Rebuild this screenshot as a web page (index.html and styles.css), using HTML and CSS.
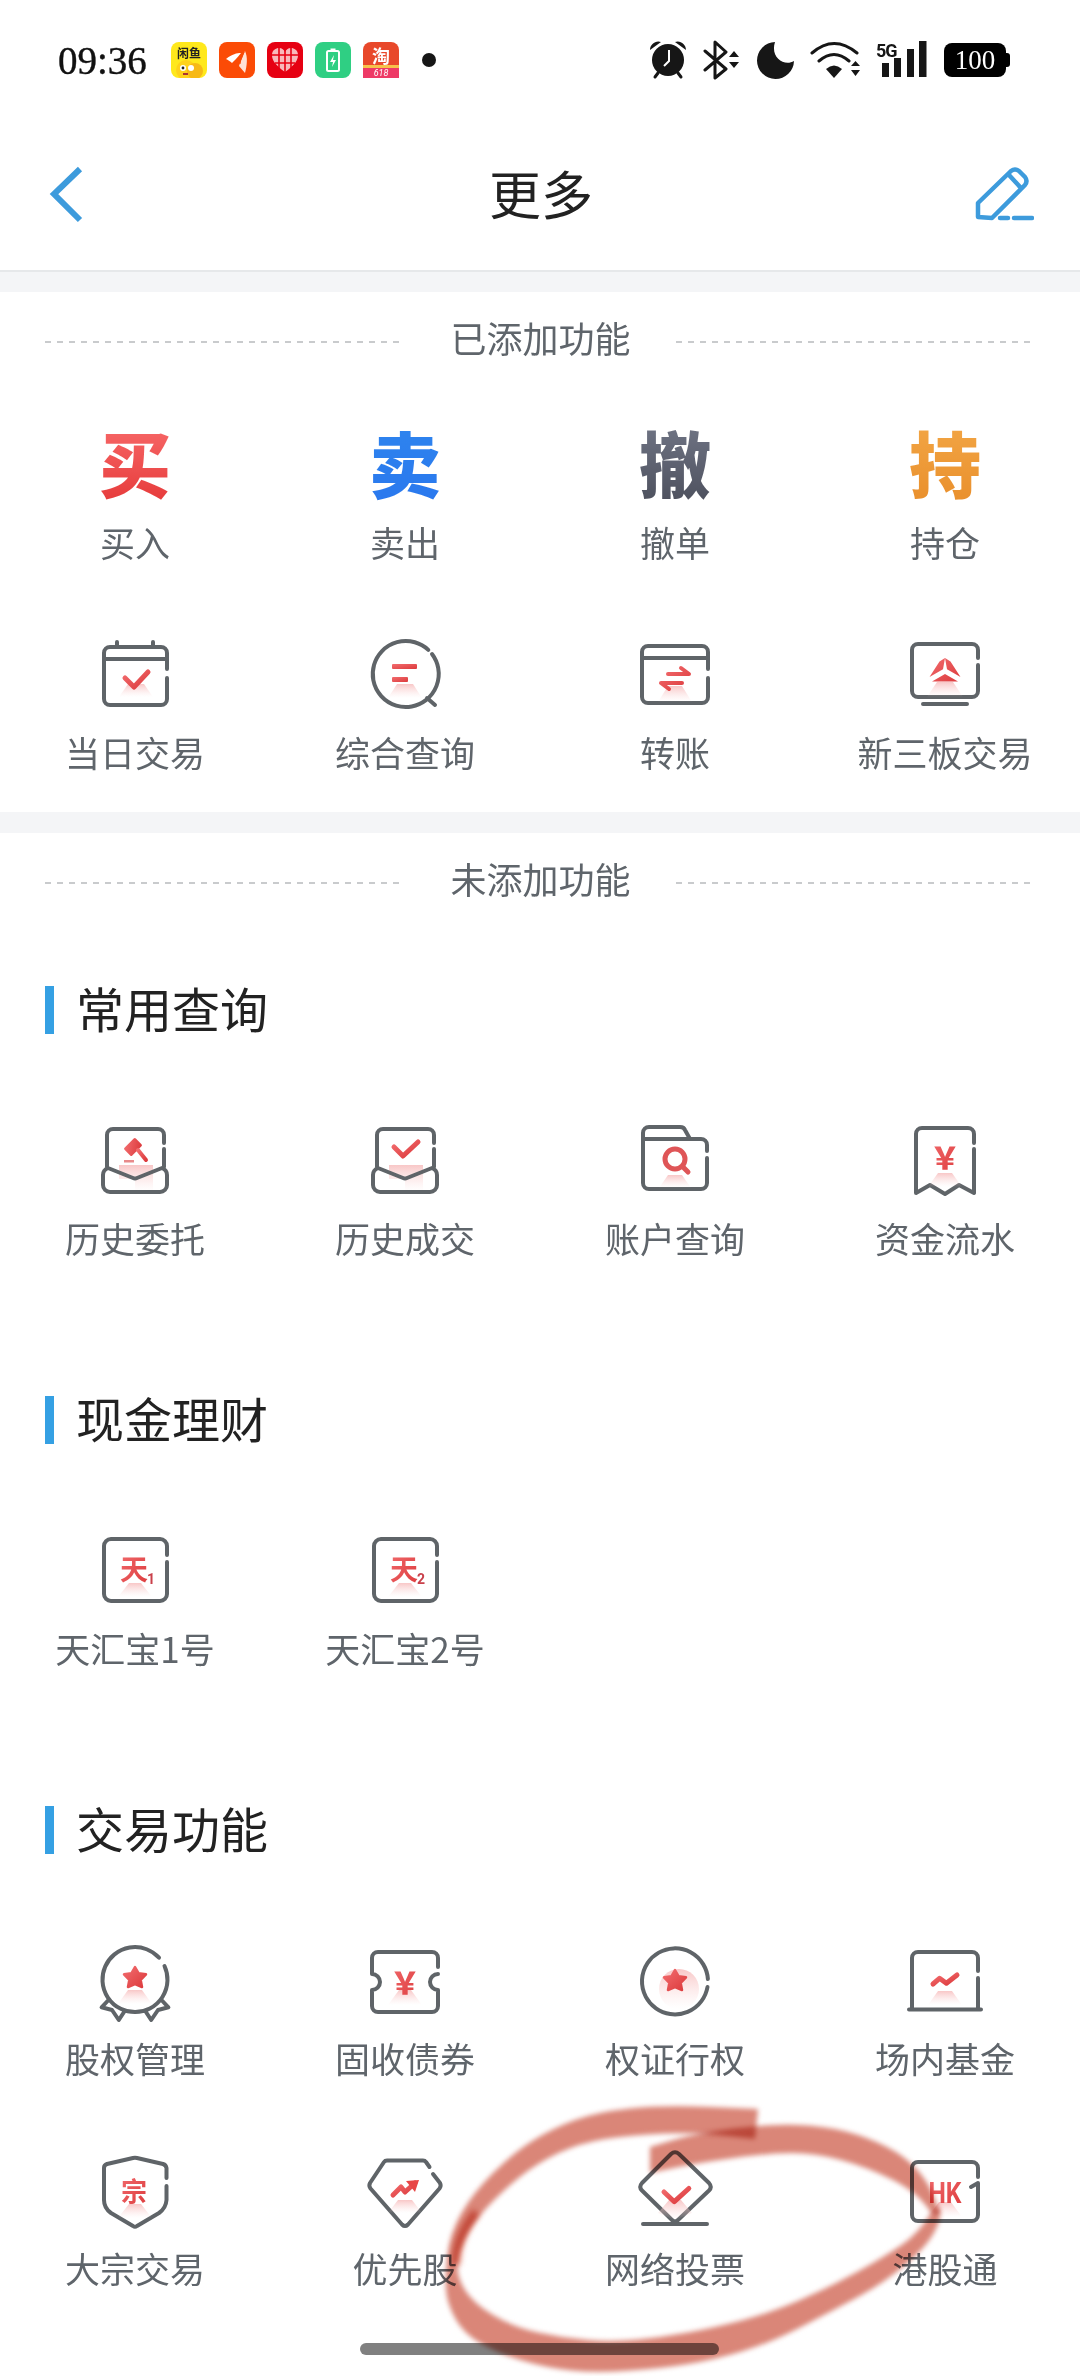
FILE: index.html
```html
<!DOCTYPE html>
<html lang="zh-CN">
<head>
    <meta charset="UTF-8">
    <meta name="viewport" content="width=device-width, initial-scale=1.0">
    <title>更多</title>
    <link rel="stylesheet" href="styles.css">
</head>
<body>
    <!-- shared gradients -->
    <svg class="defs" aria-hidden="true">
        <defs>
            <linearGradient id="red" x1="0" y1="0" x2="1" y2="1">
                <stop offset="0" stop-color="#f26c6e"/>
                <stop offset="1" stop-color="#dc3a3c"/>
            </linearGradient>
            <linearGradient id="fade" x1="0" y1="0" x2="0" y2="1">
                <stop offset="0" stop-color="#f6b4b4" stop-opacity=".75"/>
                <stop offset="1" stop-color="#fbdcdc" stop-opacity="0"/>
            </linearGradient>
        </defs>
    </svg>

    <!-- Status bar -->
    <div class="statusbar">
        <span class="time">09:36</span>
        <div class="apps">
            <svg class="app" viewBox="0 0 36 36">
                <rect width="36" height="36" rx="8" fill="#ffe81c"/>
                <text x="18" y="16" class="app-name">闲鱼</text>
                <circle cx="15" cy="28" r="10" fill="#ffd21a"/>
                <circle cx="24" cy="29" r="8" fill="#f7b916"/>
                <circle cx="12" cy="26" r="3" fill="#fff"/>
                <circle cx="20" cy="26" r="3" fill="#fff"/>
                <circle cx="12" cy="26" r="1.4" fill="#222"/>
                <path d="M12 32h5" stroke="#a33" stroke-width="2"/>
            </svg>
            <svg class="app" viewBox="0 0 36 36">
                <rect width="36" height="36" rx="8" fill="#fb4b06"/>
                <path d="M7 17C13 12 18 11 22 11C18 16 15 19 13 21C11 19 9 18 7 17Z" fill="#fff"/>
                <path d="M26 9C24 14 21 21 20 24L26 31C28 24 29 15 26 9Z" fill="#ffe3d6"/>
                <path d="M21 22C21 18 24 13 25 10" stroke="#fb4b06" stroke-width="1" fill="none"/>
            </svg>
            <svg class="app" viewBox="0 0 36 36">
                <rect width="36" height="36" rx="8" fill="#e60012"/>
                <path d="M18 30C8 23 5 18 5 13C5 8 9 6 12 6C15 6 17 8 18 10C19 8 21 6 24 6C27 6 31 8 31 13C31 18 28 23 18 30Z" fill="#f8b9bb"/>
                <path d="M18 6V30M5 13H31M8 21H28M12 6V26M24 6V26" stroke="#e60012" stroke-width="1.6"/>
            </svg>
            <svg class="app" viewBox="0 0 36 36">
                <rect width="36" height="36" rx="8" fill="#2fcf83"/>
                <rect x="12" y="9" width="12" height="20" rx="1.5" fill="none" stroke="#fff" stroke-width="2"/>
                <rect x="15.5" y="6.5" width="5" height="2.5" fill="#fff"/>
                <path d="M19 13L15 20H18L17 25L21 18H18Z" fill="#fff"/>
            </svg>
            <svg class="app" viewBox="0 0 36 36">
                <rect width="36" height="36" rx="8" fill="#e8482a"/>
                <rect y="26" width="36" height="10" fill="#ee3a66"/>
                <rect y="23" width="36" height="3" fill="#f7c24a"/>
                <text x="18" y="21" class="app-tao">淘</text>
                <text x="18" y="34" class="app-618">618</text>
            </svg>
            <span class="more-dot"></span>
        </div>
        <div class="sys-icons">
            <svg class="sys" width="38" height="40" viewBox="0 0 38 40">
                <circle cx="19" cy="20" r="16"/>
                <path d="M1 10C1 4 7 0 12 2ZM37 10C37 4 31 0 26 2Z"/>
                <path d="M9 33L6 37M29 33L32 37" class="sys-line"/>
                <path d="M20 10V21L15 26" fill="none" stroke="#fff" stroke-width="2"/>
            </svg>
            <svg class="sys" width="38" height="40" viewBox="0 0 38 40">
                <path d="M2 11L23 29L12 38V2L23 12L2 30" class="sys-line" stroke-width="3.4"/>
                <path d="M26 17H36L31 11ZM26 22H36L31 28Z"/>
            </svg>
            <svg class="sys" width="37" height="40" viewBox="0 0 37 40">
                <path d="M18 2A18.5 18.5 0 1 0 37 21C27 27 13 17 18 2Z"/>
            </svg>
            <svg class="sys" width="50" height="40" viewBox="0 0 50 40">
                <path d="M2 13Q24 -6 47 13M9 21Q24 8 39 21" class="sys-line" stroke-width="4"/>
                <path d="M16 29Q24 22 32 29L24 38Z"/>
                <path d="M41 26H50L45.500 21ZM41 30H50L45.500 36Z"/>
            </svg>
            <svg class="sys" width="52" height="40" viewBox="0 0 52 40">
                <text x="0" y="17" class="net">5G</text>
                <rect x="6" y="23" width="7" height="14"/>
                <rect x="18" y="18" width="7" height="19"/>
                <rect x="31" y="9" width="7" height="28"/>
                <rect x="43" y="1" width="7.500" height="36"/>
            </svg>
            <div class="battery"><span>100</span></div>
        </div>
    </div>

    <!-- Nav -->
    <div class="navbar">
        <svg class="nav-back" width="36" height="60" viewBox="0 0 36 60">
            <path d="M32 4L6 29L32 55"/>
        </svg>
        <h1>更多</h1>
        <svg class="nav-edit" width="60" height="60" viewBox="0 0 60 60">
            <path d="M4 52V38L37 6Q41 3 45 6L51 12Q54 16 51 20L18 53Z"/>
            <path d="M35 10L47 23"/>
            <path d="M26 53H34M40 53H58" stroke-width="4"/>
        </svg>
    </div>
    <div class="band band-first"></div>

    <!-- Added -->
    <div class="section section-added">
        <div class="divider"><span>已添加功能</span></div>
        <div class="grid">
            <div class="cell"><div class="big big-buy">买</div><p>买入</p></div>
            <div class="cell"><div class="big big-sell">卖</div><p>卖出</p></div>
            <div class="cell"><div class="big big-cancel">撤</div><p>撤单</p></div>
            <div class="cell"><div class="big big-hold">持</div><p>持仓</p></div>
            <div class="cell">
                <svg class="ico" viewBox="0 0 80 80">
                    <path d="M72 35V19a6 6 0 0 0-6-6H15a6 6 0 0 0-6 6v46a6 6 0 0 0 6 6h51a6 6 0 0 0 6-6V44M9 25H72M22 8V13M58 8V13"/>
                    <path class="glow" d="M33 50h16l9 13H24z" fill="url(#fade)"/>
                    <path class="tick" d="M30 44L39 53L53 38" stroke="url(#red)"/>
                </svg>
                <p>当日交易</p>
            </div>
            <div class="cell">
                <svg class="ico" viewBox="0 0 80 80">
                    <path d="M63.300 15.900A33 33 0 1 0 67 20M62 64L70 71"/>
                    <path class="glow" d="M32 50h16l9 14H23z" fill="url(#fade)"/>
                    <rect class="glow" x="27" y="30" width="25" height="5" rx="1" fill="url(#red)"/>
                    <rect class="glow" x="27" y="43" width="16" height="5" rx="1" fill="url(#red)"/>
                </svg>
                <p>综合查询</p>
            </div>
            <div class="cell">
                <svg class="ico" viewBox="0 0 80 80">
                    <path d="M73 35V18a6 6 0 0 0-6-6H13a6 6 0 0 0-6 6v45a6 6 0 0 0 6 6h54a6 6 0 0 0 6-6V44M7 24H73"/>
                    <path class="glow" d="M33 52h14l10 16H23z" fill="url(#fade)"/>
                    <path class="tick tick-thin" d="M33 40H54L46 34M47 49H26L34 55" stroke="url(#red)"/>
                </svg>
                <p>转账</p>
            </div>
            <div class="cell">
                <svg class="ico" viewBox="0 0 80 80">
                    <path d="M73 24V16a6 6 0 0 0-6-6H13a6 6 0 0 0-6 6v41a6 6 0 0 0 6 6h54a6 6 0 0 0 6-6V31M18 70H62"/>
                    <path class="glow" d="M32 48h16l10 15H22z" fill="url(#fade)"/>
                    <path class="glow" d="M34.500 27.500L24.500 43L38 35.300L40 24ZM45.500 27.500L55.500 43L42 35.300L40 24ZM27 47.500L40 40L53 47.500Z" fill="url(#red)"/>
                </svg>
                <p>新三板交易</p>
            </div>
        </div>
    </div>
    <div class="band band-second"></div>

    <!-- Not added -->
    <div class="section">
        <div class="divider"><span>未添加功能</span></div>

        <h2 class="group-title group-first">常用查询</h2>
        <div class="grid">
            <div class="cell">
                <svg class="ico" viewBox="0 0 80 80">
                    <path class="glow" d="M24 45h34v14H24zM40 59h18v13H40z" fill="url(#fade)"/>
                    <path d="M69 23V15a6 6 0 0 0-6-6H18a6 6 0 0 0-6 6V47M69 29V47M13 48Q8 50 8 55V65a7 7 0 0 0 7 7H65a7 7 0 0 0 7-7V55Q72 50 67 48L42 58Q40 59 38 58Z"/>
                    <rect class="glow" x="30" y="21.500" width="16" height="11" rx="1.500" transform="rotate(-45 38 27)" fill="url(#red)"/>
                    <path class="tick tick-thin" d="M43 30L51 40" stroke="url(#red)"/>
                    <rect class="glow" x="29" y="40" width="10" height="2.500" fill="#e88a8a"/>
                </svg>
                <p>历史委托</p>
            </div>
            <div class="cell">
                <svg class="ico" viewBox="0 0 80 80">
                    <path class="glow" d="M24 45h34v14H24zM40 59h18v13H40z" fill="url(#fade)"/>
                    <path d="M69 23V15a6 6 0 0 0-6-6H18a6 6 0 0 0-6 6V47M69 29V47M13 48Q8 50 8 55V65a7 7 0 0 0 7 7H65a7 7 0 0 0 7-7V55Q72 50 67 48L42 58Q40 59 38 58Z"/>
                    <path class="tick" d="M29 27L38 36L53 22" stroke="url(#red)"/>
                </svg>
                <p>历史成交</p>
            </div>
            <div class="cell">
                <svg class="ico" viewBox="0 0 80 80">
                    <path d="M72 31V25a6 6 0 0 0-6-6H55L50 10Q49 7 45 7H14a6 6 0 0 0-6 6V63a6 6 0 0 0 6 6H66a6 6 0 0 0 6-6V38M9 19H55"/>
                    <path class="glow" d="M33 55h14l9 13H24z" fill="url(#fade)"/>
                    <circle class="tick" cx="40" cy="39" r="10" stroke="#df5557"/>
                    <path class="tick" d="M48 47L53 52" stroke="#df5557"/>
                </svg>
                <p>账户查询</p>
            </div>
            <div class="cell">
                <svg class="ico" viewBox="0 0 80 80">
                    <path d="M69 23V14a6 6 0 0 0-6-6H17a6 6 0 0 0-6 6V73L25 65L40 74L54 65L69 73V29"/>
                    <path class="glow" d="M33 53h14l10 14H23z" fill="url(#fade)"/>
                    <text x="40" y="49" class="ico-text ico-yen" fill="url(#red)">￥</text>
                </svg>
                <p>资金流水</p>
            </div>
        </div>

        <h2 class="group-title">现金理财</h2>
        <div class="grid">
            <div class="cell">
                <svg class="ico" viewBox="0 0 80 80">
                    <path d="M72 25V16a7 7 0 0 0-7-7H16a7 7 0 0 0-7 7V64a7 7 0 0 0 7 7H65a7 7 0 0 0 7-7V32"/>
                    <path class="glow" d="M34 53h12l11 14H23z" fill="url(#fade)"/>
                    <text x="39" y="50" class="ico-text ico-tian" fill="url(#red)">天</text>
                    <text x="56" y="54" class="ico-text ico-sub" fill="#c9404a">1</text>
                </svg>
                <p>天汇宝1号</p>
            </div>
            <div class="cell">
                <svg class="ico" viewBox="0 0 80 80">
                    <path d="M72 25V16a7 7 0 0 0-7-7H16a7 7 0 0 0-7 7V64a7 7 0 0 0 7 7H65a7 7 0 0 0 7-7V32"/>
                    <path class="glow" d="M34 53h12l11 14H23z" fill="url(#fade)"/>
                    <text x="39" y="50" class="ico-text ico-tian" fill="url(#red)">天</text>
                    <text x="56" y="54" class="ico-text ico-sub" fill="#c9404a">2</text>
                </svg>
                <p>天汇宝2号</p>
            </div>
        </div>

        <h2 class="group-title">交易功能</h2>
        <div class="grid">
            <div class="cell">
                <svg class="ico" viewBox="0 0 80 80">
                    <path d="M64 17.700A32.500 32.500 0 1 0 69.500 26M13.500 60L6.600 67.300L17 70L23.800 80L29.700 71M66.500 60L73.400 67.300L63 70L56.200 80L50.300 71"/>
                    <path class="glow" d="M33 50h14l10 14H23z" fill="url(#fade)"/>
                    <path class="star" d="M40 27L43.500 33.200L51 34.300L45.700 39.900L47 47L40 44L33 47L34.300 39.900L29 34.300L36.500 33.200Z" fill="url(#red)" stroke="url(#red)"/>
                </svg>
                <p>股权管理</p>
            </div>
            <div class="cell">
                <svg class="ico" viewBox="0 0 80 80">
                    <path d="M73 27V18a6 6 0 0 0-6-6H13a6 6 0 0 0-6 6V34a8 8 0 0 1 0 16V66a6 6 0 0 0 6 6H67a6 6 0 0 0 6-6V50a8 8 0 0 1 0-16"/>
                    <path class="glow" d="M34 50h12l11 15H23z" fill="url(#fade)"/>
                    <text x="40" y="54" class="ico-text ico-yen" fill="url(#red)">￥</text>
                </svg>
                <p>固收债券</p>
            </div>
            <div class="cell">
                <svg class="ico" viewBox="0 0 80 80">
                    <path d="M72.900 39A33 33 0 1 0 72.500 47"/>
                    <circle class="glow" cx="44" cy="49" r="20" fill="url(#fade)"/>
                    <path class="star" d="M40 30L43.500 36.200L51 37.300L45.700 42.900L47 50L40 47L33 50L34.300 42.900L29 37.300L36.500 36.200Z" fill="url(#red)" stroke="url(#red)"/>
                </svg>
                <p>权证行权</p>
            </div>
            <div class="cell">
                <svg class="ico" viewBox="0 0 80 80">
                    <path d="M73 31V18a6 6 0 0 0-6-6H13a6 6 0 0 0-6 6V68M73 38V68M4 69.500H76"/>
                    <path class="glow" d="M33 51h14l10 14H23z" fill="url(#fade)"/>
                    <path class="tick" d="M28 44L34.500 38.300L41.400 43.300L52 35" stroke="url(#red)"/>
                </svg>
                <p>场内基金</p>
            </div>
            <div class="cell">
                <svg class="ico" viewBox="0 0 80 80">
                    <path d="M71.500 28V18Q71 15 68 14L42 8Q40 7.500 38 8L12 14Q9 15 9 18V50Q9 58 16 63L38 76Q40 77.500 42 76L64 63Q71 58 71.500 50V36"/>
                    <path class="glow" d="M34 54h12l11 14H23z" fill="url(#fade)"/>
                    <text x="39" y="51" class="ico-text ico-zong" fill="url(#red)">宗</text>
                </svg>
                <p>大宗交易</p>
            </div>
            <div class="cell">
                <svg class="ico" viewBox="0 0 80 80">
                    <path d="M64.500 17L61 12Q60 10.500 58 10.500H22Q20 10.500 19 12L5 33Q3.500 36 5.500 38.500L37 74.500Q40 77.500 43 74.500L74.500 38.500Q76.500 36 75 33L68 24"/>
                    <path class="glow" d="M33 50h14l10 13H23z" fill="url(#fade)"/>
                    <path class="tick" d="M28 45L36 37L40 42L50 33" stroke="url(#red)"/>
                    <path class="glow" d="M41 31L54 30L50 42Z" fill="#e84646"/>
                </svg>
                <p>优先股</p>
            </div>
            <div class="cell">
                <svg class="ico" viewBox="0 0 80 80">
                    <path d="M36 4Q40 .5 44 4L74 33Q77.500 37 74 40.500L43 70Q40 73 37 70L7 40.500Q3.500 37 7 33ZM8 74H72"/>
                    <path class="glow" d="M34 50h12l11 13L40 70L23 63z" fill="url(#fade)"/>
                    <path class="tick" d="M29 42L39.300 51.700L53.800 38.500" stroke="url(#red)"/>
                </svg>
                <p>网络投票</p>
            </div>
            <div class="cell">
                <svg class="ico" viewBox="0 0 80 80">
                    <path d="M73 27V18a6 6 0 0 0-6-6H13a6 6 0 0 0-6 6V65a6 6 0 0 0 6 6H67a6 6 0 0 0 6-6V33L66 37"/>
                    <path class="glow" d="M34 52h12l11 15H23z" fill="url(#fade)"/>
                    <text x="40" y="53" class="ico-text ico-hk" textLength="33" lengthAdjust="spacingAndGlyphs" fill="url(#red)">HK</text>
                </svg>
                <p>港股通</p>
            </div>
        </div>
    </div>

    <div class="home-bar"></div>

    <!-- hand drawn circle on top of the screenshot -->
    <svg class="scribble" width="1080" height="2376" viewBox="0 0 1080 2376">
        <path d="M650 2147L673.500 2140Q697 2133 733.500 2128.500Q770 2124 797.500 2125Q825 2126 846 2131.500Q867 2137 886 2146.500Q905 2156 917 2169.500Q929 2183 934.500 2198L940 2213L932 2214Q919 2193 893 2180Q867 2167 841 2160Q815 2153 792.500 2153Q770 2153 733.500 2158Q697 2163 673.500 2168L650 2173Z"/>
        <path d="M758 2109L710 2107Q663 2105 630 2108.500Q597 2112 575 2120Q553 2128 533 2140.500Q513 2153 493 2173Q473 2193 461.500 2213Q450 2233 447.500 2255Q445 2277 446 2290Q447 2303 455 2318Q463 2333 480 2343Q497 2353 522 2360.500Q547 2368 572 2370.500Q597 2373 630 2370.500Q663 2368 688 2364Q713 2360 741.500 2351.500Q770 2343 800 2327.500Q830 2312 857 2297.500Q884 2283 905 2265Q926 2247 933.500 2233.500Q941 2220 940 2213.500L939 2207L931 2213Q919 2233 901.500 2245Q884 2257 857 2272Q830 2287 800 2300Q770 2313 741.500 2320.500Q713 2328 688 2332.500Q663 2337 638 2339.500Q613 2342 588 2340Q563 2338 538 2332.500Q513 2327 493 2315Q473 2303 465 2290Q457 2277 457.500 2265Q458 2253 465.500 2238Q473 2223 486.500 2208Q500 2193 518.500 2178Q537 2163 558.500 2153Q580 2143 605 2139Q630 2135 663.500 2133.500Q697 2132 755 2139Z"/>
        <path class="scribble-dark" d="M456 2265C456 2245 463 2230 476 2212"/>
    </svg>
</body>
</html>
```

FILE: styles.css
```css
/* General */
* {
    box-sizing: border-box;
}
body {
    position: relative;
    width: 1080px;
    height: 2376px;
    margin: 0;
    overflow: hidden;
    background-color: #fff;
    font-family: "Noto Sans CJK SC", "Noto Sans", sans-serif;
    color: #5f656b;
}
p, h1, h2 {
    margin: 0;
    font-weight: 400;
}
.defs {
    position: absolute;
    width: 0;
    height: 0;
}

/* Status bar */
.statusbar {
    display: flex;
    align-items: center;
    height: 120px;
    padding: 0 70px 0 58px;
}
.time {
    font-family: "Liberation Serif", serif;
    font-size: 39px;
    color: #111;
    -webkit-text-stroke: 0.4px #111;
}
.apps {
    display: flex;
    align-items: center;
    gap: 12px;
    margin-left: 24px;
}
.app {
    width: 36px;
    height: 36px;
}
.app-name {
    font-size: 12px;
    font-weight: 700;
    text-anchor: middle;
    fill: #222;
}
.app-tao {
    font-size: 18px;
    font-weight: 700;
    text-anchor: middle;
    fill: #fff;
}
.app-618 {
    font-family: "Roboto", sans-serif;
    font-size: 9px;
    font-style: italic;
    text-anchor: middle;
    fill: #fff;
}
.more-dot {
    width: 14px;
    height: 14px;
    margin-left: 11px;
    border-radius: 50%;
    background-color: #161616;
}
.sys-icons {
    display: flex;
    align-items: center;
    gap: 16px;
    margin-left: auto;
}
.sys {
    fill: #161616;
}
.sys-line {
    fill: none;
    stroke: #161616;
    stroke-width: 3;
    stroke-linecap: round;
    stroke-linejoin: round;
}
.net {
    font-family: "Roboto", sans-serif;
    font-size: 18px;
    font-weight: 700;
    letter-spacing: -1px;
}
.battery {
    position: relative;
    display: flex;
    align-items: center;
    justify-content: center;
    width: 62px;
    height: 34px;
    margin-right: 4px;
    border-radius: 8px;
    background-color: #000;
    font-family: "Liberation Serif", serif;
    font-size: 27px;
    color: #fff;
}
.battery::after {
    content: "";
    position: absolute;
    top: 10px;
    right: -4px;
    width: 4px;
    height: 14px;
    border-radius: 0 3px 3px 0;
    background-color: #000;
}

/* Nav */
.navbar {
    display: grid;
    grid-template-columns: 1fr auto 1fr;
    align-items: center;
    height: 150px;
    padding: 0 46px 0 48px;
}
.navbar h1 {
    margin-bottom: 6px;
    font-size: 52px;
    color: #222;
}
.nav-back path {
    fill: none;
    stroke: #3d9bdc;
    stroke-width: 6;
}
.nav-edit {
    justify-self: end;
}
.nav-edit path {
    fill: none;
    stroke: #3d9bdc;
    stroke-width: 4.5;
    stroke-linecap: round;
    stroke-linejoin: round;
}
.band {
    background-color: #f4f5f7;
}
.band-first {
    height: 22px;
    border-top: 2px solid #e6e8ea;
}
.band-second {
    height: 21px;
}

/* Sections */
.section-added {
    height: 520px;
}
.divider {
    display: flex;
    align-items: center;
    gap: 48px;
    height: 100px;
    padding: 0 50px 0 45px;
    font-size: 36px;
    white-space: nowrap;
}
.divider span {
    margin: 0 -3px 10px 3px;
}
.divider::before,
.divider::after {
    content: "";
    flex: 1;
    height: 2px;
    background-image: repeating-linear-gradient(90deg, #c9cbcd 0 6px, transparent 6px 12px);
}
.section-added .grid {
    margin-top: 32px;
}
.group-title {
    height: 48px;
    margin: 138px 0 86px 45px;
    padding-left: 22px;
    border-left: 9px solid #35a0e3;
    font-size: 48px;
    line-height: 42px;
    color: #222;
}
.group-first {
    margin-top: 53px;
}
.grid {
    display: grid;
    grid-template-columns: repeat(4, 1fr);
    row-gap: 72px;
}
.cell {
    display: flex;
    flex-direction: column;
    align-items: center;
    gap: 18px;
}
.cell p {
    font-size: 35px;
    line-height: 40px;
    white-space: nowrap;
}

/* Big letter icons */
.big {
    height: 80px;
    font-size: 72px;
    font-weight: 900;
    line-height: 74px;
    -webkit-background-clip: text;
    background-clip: text;
    color: transparent;
}
.big-buy {
    background-image: linear-gradient(#f76868, #e63a3a);
}
.big-sell {
    background-image: linear-gradient(#2e84ee, #2a78ee);
}
.big-cancel {
    background-image: linear-gradient(#6f7484, #4d505d);
}
.big-hold {
    background-image: linear-gradient(#f2a544, #e98f2c);
}

/* Line icons */
.ico {
    width: 80px;
    height: 80px;
    overflow: visible;
}
.ico path,
.ico circle {
    fill: none;
    stroke: #5f6468;
    stroke-width: 4;
    stroke-linecap: round;
    stroke-linejoin: round;
}
.ico .glow {
    stroke: none;
    fill: revert-layer;
}
.ico .tick {
    stroke-width: 5;
    stroke: revert-layer;
}
.ico .tick-thin {
    stroke-width: 4;
}
.ico .star {
    stroke-width: 2.5;
    stroke: revert-layer;
    fill: revert-layer;
}
.ico-text {
    font-weight: 700;
    text-anchor: middle;
}
.ico-yen {
    font-size: 30px;
    font-weight: 900;
}
.ico-tian {
    font-size: 28px;
}
.ico-sub {
    font-family: "Roboto", sans-serif;
    font-size: 14px;
}
.ico-zong {
    font-size: 26px;
}
.ico-hk {
    font-family: "Roboto", sans-serif;
    font-size: 29px;
}

/* Overlays */
.home-bar {
    position: absolute;
    left: 360px;
    top: 2343px;
    width: 359px;
    height: 12px;
    border-radius: 6px;
    background-color: #808080;
}
.scribble {
    position: absolute;
    left: 0;
    top: 0;
    mix-blend-mode: multiply;
    pointer-events: none;
}
.scribble path {
    fill: #da8678;
    mix-blend-mode: multiply;
    filter: blur(2.5px);
}
.scribble .scribble-dark {
    fill: none;
    stroke: #e07a66;
    stroke-width: 8;
    filter: blur(3px);
}
```
